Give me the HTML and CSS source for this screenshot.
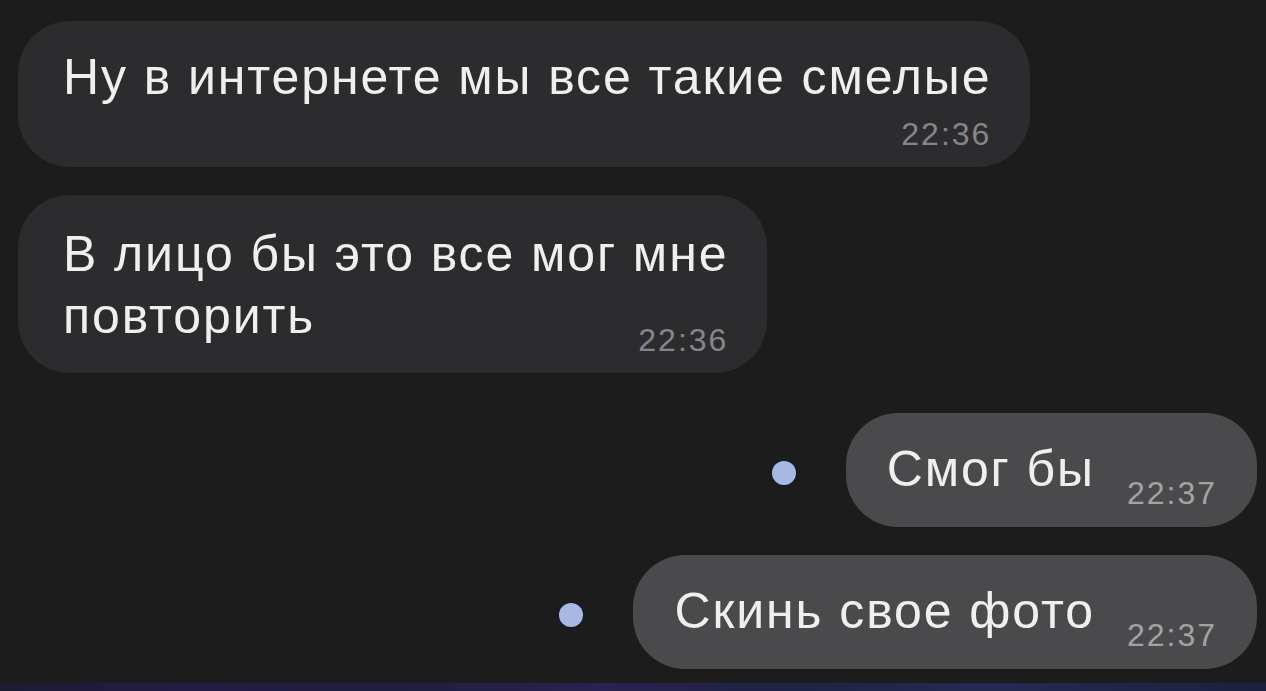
FILE: index.html
```html
<!DOCTYPE html>
<html lang="ru">
<head>
<meta charset="utf-8">
<title>Чат</title>
<link rel="stylesheet" href="styles.css">
</head>
<body>
<main class="chat">
  <div class="msg msg-in">
    <div class="bubble bubble-in">
      <p class="text">Ну в интернете мы все такие смелые</p>
      <span class="time">22:36</span>
    </div>
  </div>
  <div class="msg msg-in msg-gap">
    <div class="bubble bubble-in bubble-wrap">
      <p class="text">В лицо бы это все мог мне<br>повторить</p>
      <span class="time">22:36</span>
    </div>
  </div>
  <div class="msg msg-out msg-gap-lg">
    <span class="unread"></span>
    <div class="bubble bubble-out">
      <p class="text">Смог бы</p>
      <span class="time">22:37</span>
    </div>
  </div>
  <div class="msg msg-out msg-gap">
    <span class="unread"></span>
    <div class="bubble bubble-out">
      <p class="text">Скинь свое фото</p>
      <span class="time">22:37</span>
    </div>
  </div>
</main>
<div class="bottom-bar"></div>
</body>
</html>
```

FILE: styles.css
```css
html, body {
  margin: 0;
  height: 100%;
}

body {
  background: #1c1c1c;
  font-family: "Liberation Sans", Arial, sans-serif;
  color: #efefef;
  display: flex;
  flex-direction: column;
  overflow: hidden;
}

.chat {
  flex: 1;
  display: flex;
  flex-direction: column;
  padding: 21px 9px 0 18px;
}

.msg {
  display: flex;
  align-items: center;
}

.msg-in {
  align-self: flex-start;
}

.msg-out {
  align-self: flex-end;
}

.msg-gap {
  margin-top: 28px;
}

.msg-gap-lg {
  margin-top: 40px;
}

.bubble {
  border-radius: 52px;
}

.text {
  margin: 0;
  font-size: 50px;
  line-height: 62px;
  letter-spacing: 1.9px;
  white-space: nowrap;
}

.time {
  font-size: 32px;
  line-height: 32px;
  letter-spacing: 2px;
  white-space: nowrap;
}

.bubble-in {
  background: #2c2c2e;
  display: flex;
  flex-direction: column;
  padding: 25px 39px 17px 45px;
}

.bubble-in .time {
  align-self: flex-end;
  margin-top: 10px;
  color: #86868a;
}

.bubble-wrap {
  padding-top: 28px;
}

.bubble-wrap .time {
  margin-top: -23px;
}

.bubble-out {
  background: #4a4a4c;
  display: flex;
  align-items: flex-start;
  gap: 32px;
  padding: 25px 40px 18px 41px;
}

.bubble-out .time {
  margin-top: 39px;
  color: #a3a3a5;
}

.unread {
  width: 24px;
  height: 24px;
  border-radius: 50%;
  background: #a7b9e2;
  box-shadow: 0 0 2px 1px rgba(20, 30, 60, 0.9);
  margin: 6px 50px 0 0;
}

.bottom-bar {
  height: 8px;
  background: linear-gradient(90deg, #1d1b33 0%, #241c45 15%, #1f1d3e 30%, #2a2250 48%, #1e2244 62%, #242a52 78%, #1b2040 100%);
}
```
